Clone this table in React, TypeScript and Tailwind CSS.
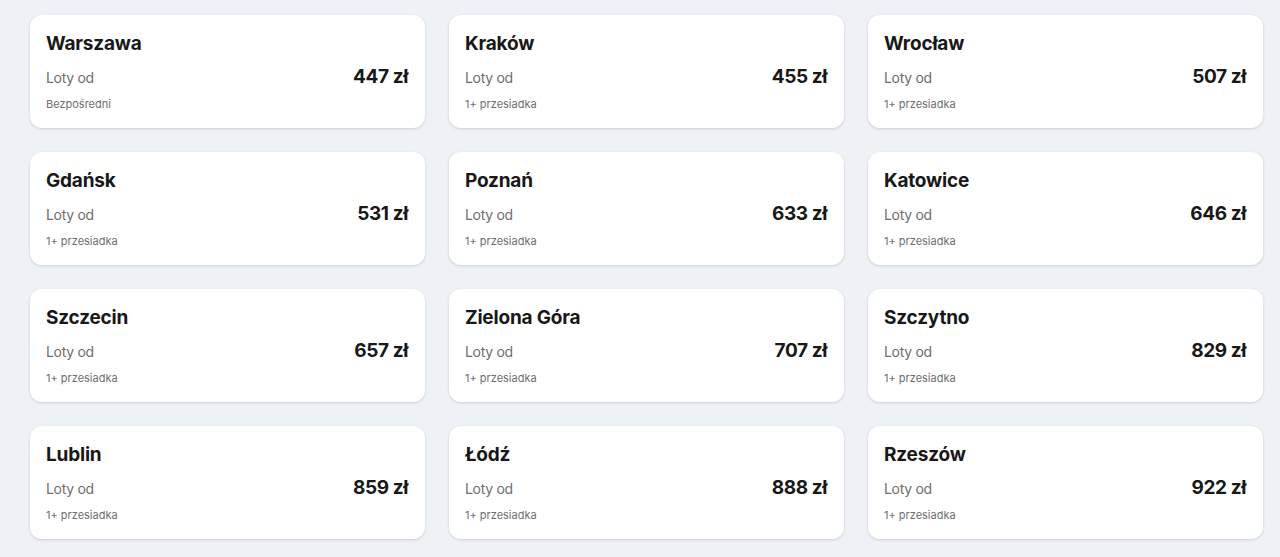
const destinations = [
  { city: 'Warszawa', price: 447, stops: 'Bezpośredni' },
  { city: 'Kraków', price: 455, stops: '1+ przesiadka' },
  { city: 'Wrocław', price: 507, stops: '1+ przesiadka' },
  { city: 'Gdańsk', price: 531, stops: '1+ przesiadka' },
  { city: 'Poznań', price: 633, stops: '1+ przesiadka' },
  { city: 'Katowice', price: 646, stops: '1+ przesiadka' },
  { city: 'Szczecin', price: 657, stops: '1+ przesiadka' },
  { city: 'Zielona Góra', price: 707, stops: '1+ przesiadka' },
  { city: 'Szczytno', price: 829, stops: '1+ przesiadka' },
  { city: 'Lublin', price: 859, stops: '1+ przesiadka' },
  { city: 'Łódź', price: 888, stops: '1+ przesiadka' },
  { city: 'Rzeszów', price: 922, stops: '1+ przesiadka' },
];

export default function App() {
  return (
    <div
      className="min-h-[557px] bg-[#eef1f5] pl-[30px] pt-[15px]"
      style={{ fontFamily: 'Inter, "Noto Sans", sans-serif' }}
    >
      <div className="grid w-[1233px] grid-cols-3 gap-6">
        {destinations.map((d) => (
          <div
            key={d.city}
            className="h-[113px] rounded-xl bg-white px-4 pt-[15px] shadow-[0_1px_3px_rgba(0,0,0,0.14)]"
          >
            <p className="text-[19px] font-bold leading-[28px] tracking-[-0.2px] text-[#181818]">{d.city}</p>
            <div className="mt-[5px] flex items-center justify-between pr-px">
              <span className="text-[14px] tracking-[-0.3px] text-[#6e6e6e]">Loty od</span>
              <span className="text-[19px] font-bold leading-[28px] tracking-[-0.4px] text-[#181818]">
                {d.price} zł
              </span>
            </div>
            <p className="mt-[5px] text-[11px] leading-4 text-[#6e6e6e]">{d.stops}</p>
          </div>
        ))}
      </div>
    </div>
  );
}
